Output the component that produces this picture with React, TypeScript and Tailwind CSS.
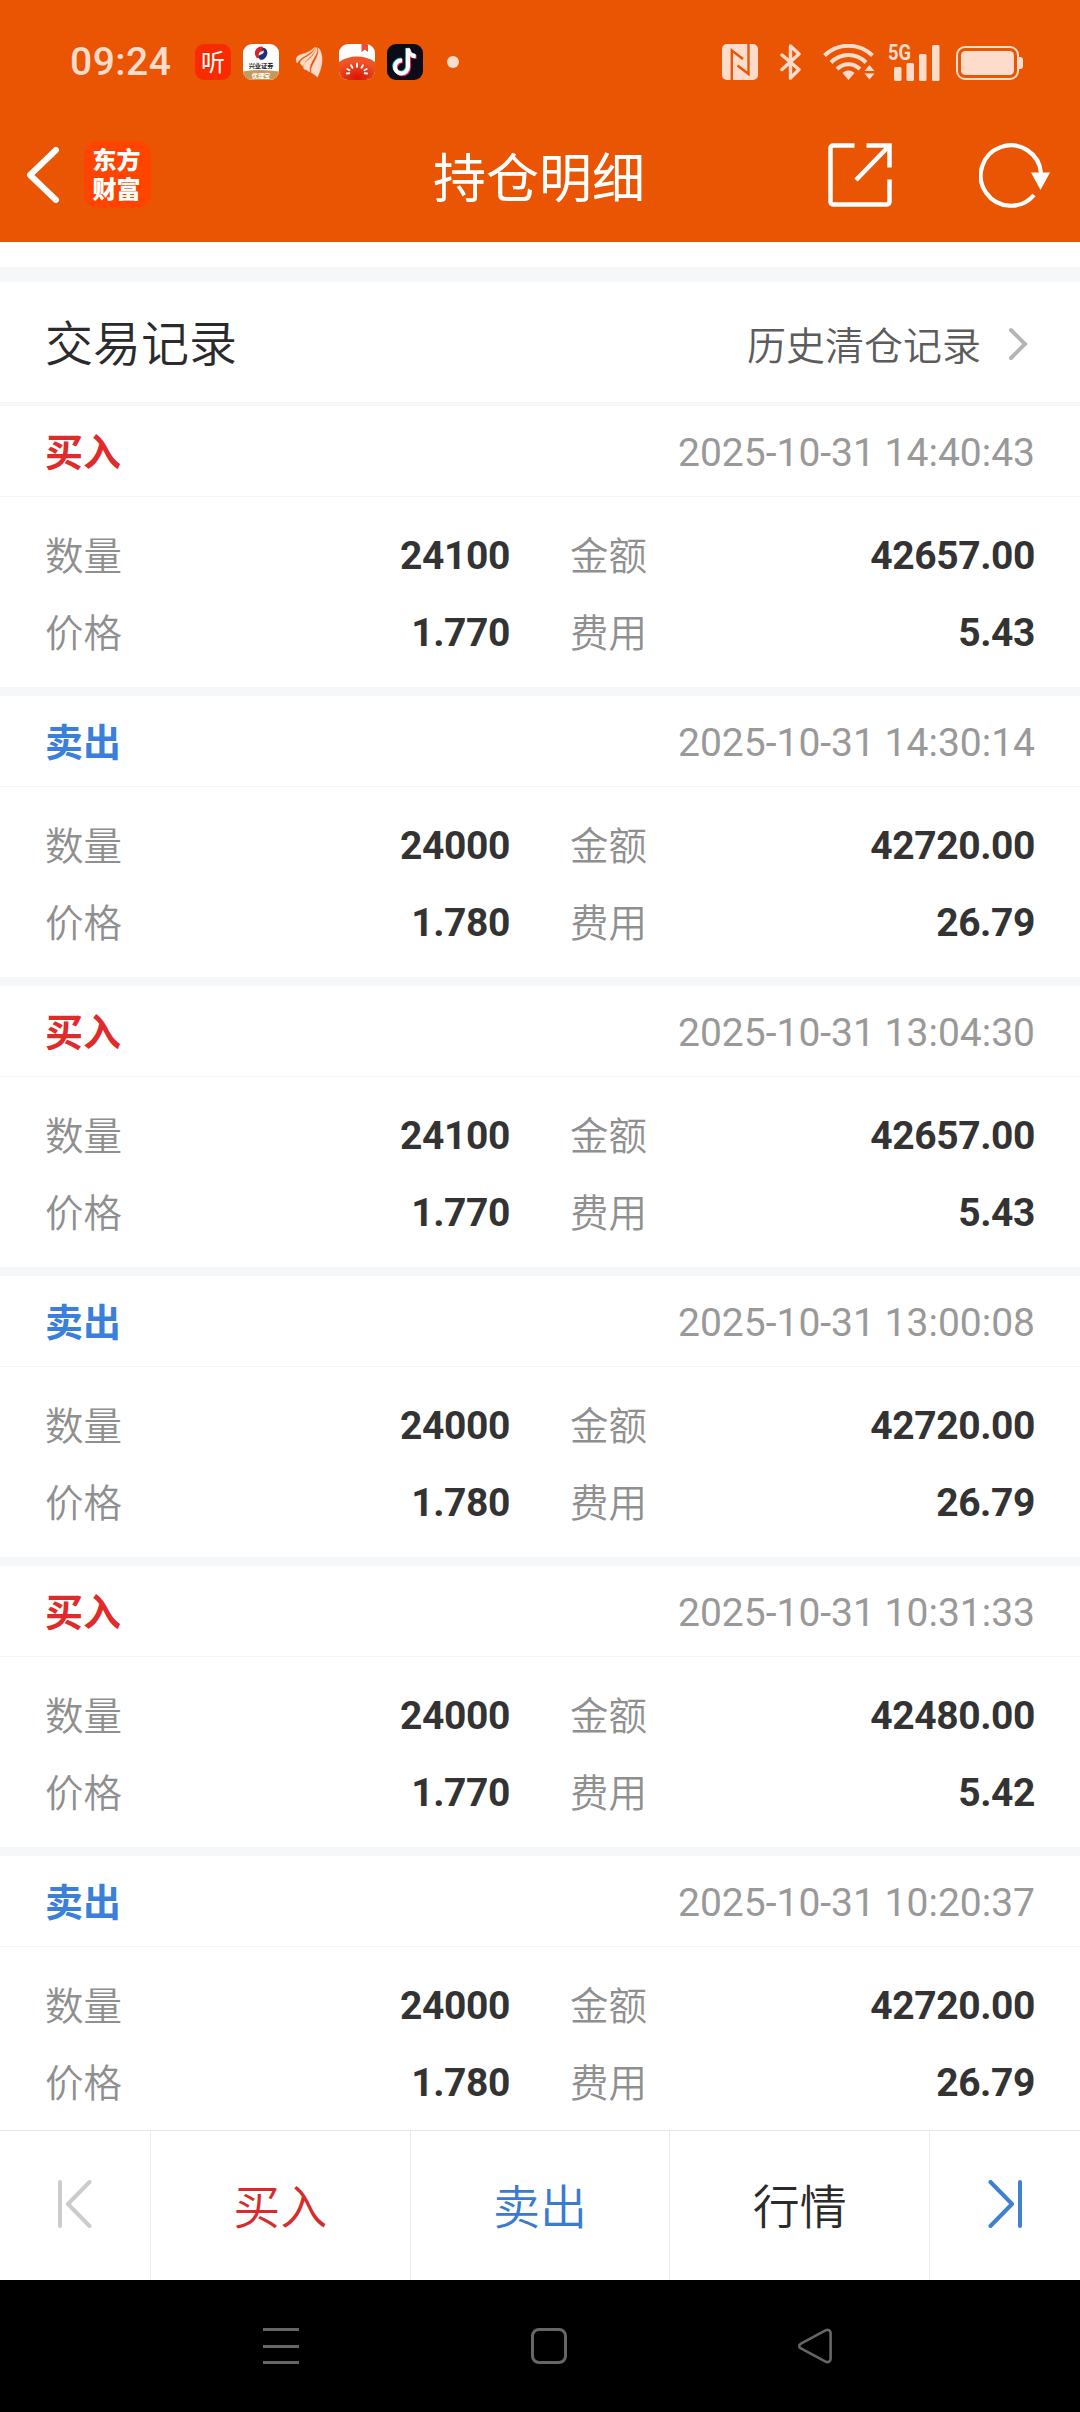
import React from "react";

import clsx from "clsx";

type TRecord = {
  side: "buy" | "sell";
  time: string;
  count: string;
  amount: string;
  price: string;
  fee: string;
};

const RECORDS: TRecord[] = [
  {
    side: "buy",
    time: "2025-10-31 14:40:43",
    count: "24100",
    amount: "42657.00",
    price: "1.770",
    fee: "5.43",
  },
  {
    side: "sell",
    time: "2025-10-31 14:30:14",
    count: "24000",
    amount: "42720.00",
    price: "1.780",
    fee: "26.79",
  },
  {
    side: "buy",
    time: "2025-10-31 13:04:30",
    count: "24100",
    amount: "42657.00",
    price: "1.770",
    fee: "5.43",
  },
  {
    side: "sell",
    time: "2025-10-31 13:00:08",
    count: "24000",
    amount: "42720.00",
    price: "1.780",
    fee: "26.79",
  },
  {
    side: "buy",
    time: "2025-10-31 10:31:33",
    count: "24000",
    amount: "42480.00",
    price: "1.770",
    fee: "5.42",
  },
  {
    side: "sell",
    time: "2025-10-31 10:20:37",
    count: "24000",
    amount: "42720.00",
    price: "1.780",
    fee: "26.79",
  },
];

const NotificationIcons = () => (
  <div className="ml-[24px] flex items-center gap-[12px]">
    <svg
      width="36"
      height="36"
      viewBox="0 0 36 36"
      className="overflow-visible"
    >
      <rect width="36" height="36" rx="9" fill="#fa2a00" />
      <text
        x="18"
        y="26.500"
        fontSize="24"
        textAnchor="middle"
        fill="#fff"
        className="font-['Noto_Sans_CJK_SC',sans-serif]"
      >
        听
      </text>
    </svg>

    <svg width="36" height="36" viewBox="0 0 36 36">
      <defs>
        <clipPath id="broker">
          <rect width="36" height="36" rx="9" />
        </clipPath>
      </defs>
      <g clipPath="url(#broker)">
        <rect width="36" height="36" fill="#fff" />
        <path d="M0 27.500q18-3 36 0V36H0z" fill="#c39a5b" />
        <path
          d="M19 2.400a6.800 6.800 0 0 0-5.600 11c1.200 1 3 1 4.300 0c-3-1.500-2.600-5.400 1-5.800c2-.3 2.800-1.800 2-3.500z"
          fill="#d6222b"
        />
        <path
          d="M17 15.800a6.800 6.800 0 0 0 5.800-11c-1.200-1-2.800-1-4 0c3 1.500 2.600 5-.8 5.600c-2 .3-2.800 1.800-2 3.500z"
          fill="#1f2f7d"
        />
        <text
          x="18"
          y="23.500"
          fontSize="6.200"
          fontWeight="700"
          textAnchor="middle"
          fill="#222"
          className="font-['Noto_Sans_CJK_SC',sans-serif]"
        >
          兴业证券
        </text>
        <text
          x="18"
          y="33.500"
          fontSize="6.200"
          fontWeight="700"
          textAnchor="middle"
          fill="#fff"
          className="font-['Noto_Sans_CJK_SC',sans-serif]"
        >
          优理宝
        </text>
      </g>
    </svg>

    <svg
      width="36"
      height="36"
      viewBox="0 0 36 36"
      fill="#fddccb"
      stroke="#fddccb"
      strokeWidth="0.6"
    >
      <path d="M6 19C4.500 15 5.500 12 9.500 10.800C14 9.500 19 8 24 3.200C21 10 10.500 11.500 6 19z" />
      <path d="M13 25C12 21.500 13 19.500 15.500 17.500C20 14 24 10 26 3.500C27.500 12 17.500 17 18.500 28C17 26.500 15 25.300 13 25z" />
      <path d="M12 22C9.500 20.500 8.500 18.500 10.500 16.500C14 13 21 11.500 25 3.500C23 12 13.500 15.500 12 22z" />
      <path d="M26.300 33C24.500 31 22 29.500 20.200 28.500C19.500 20 28.500 15 27.500 4C33 11 31.500 23 26.300 33z" />
    </svg>

    <svg width="36" height="36" viewBox="0 0 36 36">
      <defs>
        <clipPath id="tomato">
          <rect width="36" height="36" rx="9" />
        </clipPath>
        <radialGradient id="tomatoSkin" cx="0.5" cy="0.9" r="0.7">
          <stop offset="0" stopColor="#d81507" />
          <stop offset="1" stopColor="#ef5426" />
        </radialGradient>
      </defs>
      <g clipPath="url(#tomato)">
        <rect width="36" height="36" fill="#fff" />
        <path d="M22.500 0h6.500v8l-3.200-2.500L22.500 8z" fill="#ee4c30" />
        <path d="M0 18Q8 12.500 18 12.500T36 18V36H0z" fill="url(#tomatoSkin)" />
        <path
          d="M18 19.500v3.200M12 21.300l1.500 2.500M24 21.300l-1.500 2.500M8.300 25l2.200 1.300M27.700 25l-2.200 1.300M7.800 29.500l2.500-.3M28.200 29.500l-2.500-.3"
          stroke="#fff"
          strokeWidth="1.900"
          strokeLinecap="round"
        />
      </g>
    </svg>

    <svg width="36" height="36" viewBox="0 0 36 36" fill="none">
      <rect width="36" height="36" rx="9" fill="#0b0c18" />
      <g strokeWidth="4">
        <path
          d="M14.300 15.800a6.500 6.500 0 1 0 6 6.500V4c.5 4.500 3.500 7.300 7.700 7.500"
          stroke="#25e5e0"
        />
        <path
          d="M15.900 17.300a6.500 6.500 0 1 0 6 6.500V5.500c.5 4.500 3.500 7.300 7.700 7.500"
          stroke="#f52c56"
        />
        <path
          d="M15 16.500a6.500 6.500 0 1 0 6 6.500V4.500c.5 4.500 3.500 7.600 7.700 7.800"
          stroke="#fff"
        />
      </g>
    </svg>

    <div className="flex w-9 justify-center">
      <span className="size-3 rounded-full bg-[#fddccb]" />
    </div>
  </div>
);

const SystemIcons = () => (
  <div className="ml-auto flex items-center">
    {/* NFC */}
    <svg width="36" height="36" viewBox="0 0 36 36" fill="none">
      <rect width="36" height="36" rx="5" fill="#fddccb" />
      <path
        d="M9.800 36V6.500L21 15M26.500 0v30L15.500 21.500"
        stroke="#ea5504"
        strokeWidth="2.400"
      />
    </svg>

    {/* 블루투스 */}
    <svg
      width="22"
      height="36"
      viewBox="0 0 22 36"
      fill="none"
      stroke="#fddccb"
      strokeWidth="3.400"
      strokeLinejoin="round"
      strokeLinecap="round"
      className="ml-[22px]"
    >
      <path d="M2 11L19 25.500L10.500 34V2L19 10L2 25.500" />
    </svg>

    {/* Wi-Fi */}
    <svg
      width="52"
      height="36"
      viewBox="0 0 52 36"
      fill="none"
      stroke="#fddccb"
      strokeWidth="4"
      className="ml-[21px]"
    >
      <path d="M1.500 11.500C15-1.500 36-1.500 49.500 11.500" />
      <path d="M8 18.500C18 8.500 33 8.500 43 18.500" />
      <path d="M14 25C21 18.500 30 18.500 37 25" />
      <path
        d="M25.500 26.500c2.500 0 4.500 1 6 2.500l-6 7l-6-7c1.500-1.500 3.500-2.500 6-2.500z"
        fill="#fddccb"
        stroke="none"
      />
      <path
        d="M46.500 21l5 6h-10zM46.500 35.500l5-6h-10z"
        fill="#fddccb"
        stroke="none"
      />
    </svg>

    <svg
      width="52"
      height="37"
      viewBox="0 0 52 37"
      fill="#fddccb"
      className="ml-[13px] overflow-visible"
    >
      <text
        x="0"
        y="16"
        fontSize="22"
        fontWeight="700"
        textLength="23"
        lengthAdjust="spacingAndGlyphs"
        className="font-['Roboto',sans-serif]"
      >
        5G
      </text>
      <rect x="6" y="23" width="7.500" height="14" rx="1.500" />
      <rect x="18.500" y="19" width="7.500" height="18" rx="1.500" />
      <rect x="31" y="10" width="7.500" height="27" rx="1.500" />
      <rect x="44" y="1" width="7.500" height="36" rx="1.500" />
    </svg>

    {/* 배터리 */}
    <svg
      width="67"
      height="34"
      viewBox="0 0 67 34"
      fill="#fddccb"
      className="mt-[2px] ml-[16px]"
    >
      <rect
        x="1"
        y="1"
        width="61"
        height="32"
        rx="8"
        fill="none"
        stroke="#fddccb"
        strokeWidth="2"
      />
      <rect x="5" y="5" width="53" height="24" rx="4.500" />
      <path d="M63 11h1a3 3 0 0 1 3 3v6a3 3 0 0 1-3 3h-1z" />
    </svg>
  </div>
);

const Header = () => (
  <header className="flex h-[242px] shrink-0 flex-col bg-[#ea5504]">
    <div className="flex h-[107px] items-center pt-[17px] pr-[57px] pl-[70px]">
      <span className="w-[101px] font-['Roboto',sans-serif] text-[39px] leading-none font-medium tracking-[0.5px] text-[#fddccb]">
        09:24
      </span>
      <NotificationIcons />
      <SystemIcons />
    </div>

    <div className="grid h-[135px] grid-cols-[1fr_auto_1fr] items-center">
      <div className="flex items-center pl-[26px]">
        <svg
          width="34"
          height="56"
          viewBox="0 0 34 56"
          fill="none"
          stroke="#fff"
          strokeWidth="6"
          strokeLinecap="round"
          strokeLinejoin="round"
        >
          <path d="M30 3L4 28L30 53" />
        </svg>
        <div className="ml-[24px] flex size-[67px] items-center justify-center rounded-[14px] bg-[#ff4400] pr-[2px] pb-[4px] text-center text-[24px] leading-[29px] font-black text-white">
          东方
          <br />
          财富
        </div>
      </div>
      <h1 className="pt-[1px] pr-[2px] text-[53px] leading-none text-white">
        持仓明细
      </h1>
      <div className="flex items-center justify-end pr-[29px]">
        <svg
          width="64"
          height="64"
          viewBox="0 0 64 64"
          fill="none"
          stroke="#fff"
          strokeWidth="4.500"
        >
          <path d="M26.500 2.500H5a2.500 2.500 0 0 0-2.500 2.500V59A2.500 2.500 0 0 0 5 61.500H59a2.500 2.500 0 0 0 2.500-2.500V36.500" />
          <path d="M38.500 2.500H61.500V24.500M61 3L28 37" />
        </svg>
        <svg
          width="72"
          height="66"
          viewBox="0 0 72 66"
          fill="none"
          stroke="#fff"
          strokeWidth="4.200"
          className="ml-[87px]"
        >
          <path d="M55 53A30.200 30.200 0 1 1 62 31" />
          <path d="M52 30.500h19L61.500 48z" fill="#fff" stroke="none" />
        </svg>
      </div>
    </div>
  </header>
);

type TFieldProps = {
  label: string;
  value: string;
};

const Field = ({ label, value }: TFieldProps) => (
  <div className="flex h-[77px] items-center justify-between">
    <span className="pb-[4px] text-[38.500px] font-[350] text-[#8f8f8f]">
      {label}
    </span>
    <span className="pt-[2px] font-['Roboto',sans-serif] text-[39px] font-bold tracking-[-0.4px] text-[#333]">
      {value}
    </span>
  </div>
);

const RecordItem = ({ side, time, count, amount, price, fee }: TRecord) => (
  <li className="h-[290px] shrink-0 border-b-[9px] border-[#f6f7f9]">
    <div className="flex h-[91px] items-center justify-between border-b border-[#f4f5f7] px-[45px]">
      <span
        className={clsx(
          "pb-[3px] text-[38px] font-bold",
          side === "buy" ? "text-[#e02b2b]" : "text-[#3a7fd9]",
        )}
      >
        {side === "buy" ? "买入" : "卖出"}
      </span>
      <span className="pt-[4px] font-['Roboto',sans-serif] text-[39px] text-[#999]">
        {time}
      </span>
    </div>
    <div className="grid grid-cols-2 gap-x-[60px] px-[45px] pt-[20px]">
      <Field label="数量" value={count} />
      <Field label="金额" value={amount} />
      <Field label="价格" value={price} />
      <Field label="费用" value={fee} />
    </div>
  </li>
);

const BottomBar = () => (
  <div className="flex h-[150px] shrink-0 divide-x divide-[#ebebeb] border-t border-[#e6e6e6] bg-white text-[47px] font-[350]">
    <div className="flex w-[151px] items-center justify-center pb-[4px]">
      <svg
        width="34"
        height="48"
        viewBox="0 0 34 48"
        fill="none"
        stroke="#ccc"
        strokeWidth="4"
        strokeLinecap="round"
        strokeLinejoin="round"
      >
        <path d="M2 2V46M31.500 2L10 24L31.500 46" />
      </svg>
    </div>
    <div className="flex flex-1 items-center justify-center pb-[2px] text-[#d62c2c]">
      买入
    </div>
    <div className="flex flex-1 items-center justify-center pb-[2px] text-[#3a7bd0]">
      卖出
    </div>
    <div className="flex flex-1 items-center justify-center pb-[2px] text-[#2b2b2b]">
      行情
    </div>
    <div className="flex w-[150px] items-center justify-center pb-[4px]">
      <svg
        width="34"
        height="48"
        viewBox="0 0 34 48"
        fill="none"
        stroke="#3f80d0"
        strokeWidth="4"
        strokeLinecap="round"
        strokeLinejoin="round"
      >
        <path d="M32 2V46M2.500 2L24 24L2.500 46" />
      </svg>
    </div>
  </div>
);

const SystemNav = () => (
  <nav className="flex h-[132px] shrink-0 items-center bg-black pl-[263px]">
    <div className="flex h-9 w-9 flex-col justify-between">
      <span className="h-[3px] bg-[#666]" />
      <span className="h-[3px] bg-[#666]" />
      <span className="h-[3px] bg-[#666]" />
    </div>
    <div className="ml-[232px] size-[36px] rounded-[8px] border-[3px] border-[#666]" />
    <svg
      width="36"
      height="36"
      viewBox="0 0 36 36"
      fill="none"
      stroke="#666"
      strokeWidth="2.600"
      strokeLinejoin="round"
      className="ml-[230px]"
    >
      <path d="M29 2.200L3.500 15.800a2.600 2.600 0 0 0 0 4.400L29 33.800a3.200 3.200 0 0 0 4.600-2.800V5A3.200 3.200 0 0 0 29 2.200z" />
    </svg>
  </nav>
);

const App = () => {
  return (
    <div className="flex h-[2412px] w-[1080px] flex-col overflow-hidden bg-white font-['Noto_Sans_CJK_SC',sans-serif]">
      <Header />

      <main className="flex min-h-0 flex-1 flex-col overflow-hidden">
        <div className="mt-[25px] h-[15px] shrink-0 bg-[#f6f7f9]" />
        <div className="flex h-[124px] shrink-0 items-center justify-between border-b-4 border-[#f6f7f9] pr-[52px] pl-[45px]">
          <h2 className="pb-[5px] text-[48px] font-[350] text-[#2b2b2b]">
            交易记录
          </h2>
          <div className="flex items-center">
            <span className="pt-[2px] text-[39px] font-[350] text-[#5c5c5c]">
              历史清仓记录
            </span>
            <svg
              width="20"
              height="34"
              viewBox="0 0 20 34"
              fill="none"
              stroke="#b5b5b5"
              strokeWidth="4"
              strokeLinecap="round"
              className="mt-[4px] ml-[27px]"
            >
              <path d="M3 3L17 17L3 31" />
            </svg>
          </div>
        </div>
        <ul className="flex flex-col">
          {RECORDS.map((record) => (
            <RecordItem key={record.time} {...record} />
          ))}
        </ul>
      </main>

      <BottomBar />
      <SystemNav />
    </div>
  );
};

export default App;
